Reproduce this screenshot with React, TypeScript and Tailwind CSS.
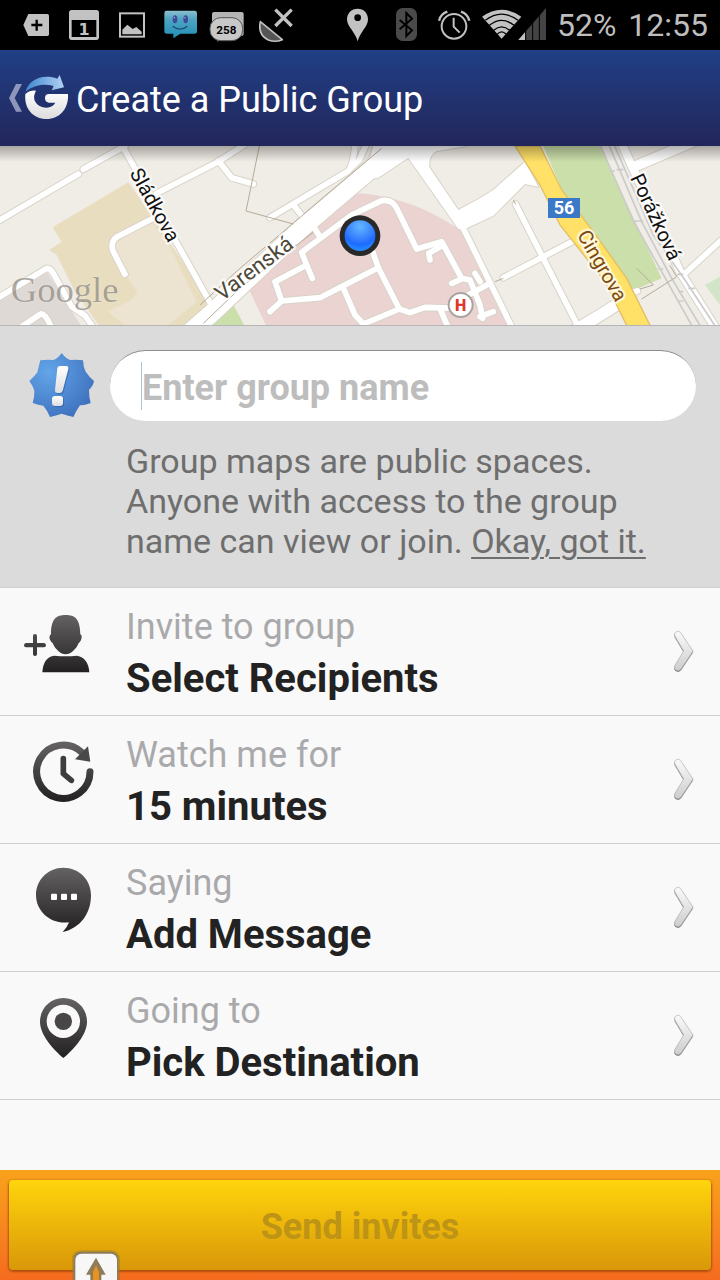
import type { ReactNode } from 'react';

const StatusIcon = ({ viewBox, label, children }: { viewBox: string; label: string; children: ReactNode }) => (
    <svg viewBox={viewBox} className="w-12 h-[50px] shrink-0" role="img" aria-label={label}>
        {children}
    </svg>
);

const StatusBar = () => (
    <div className="h-[50px] bg-black flex items-center pl-3 pr-3 text-[#bebebe]">
        <StatusIcon viewBox="36 0 144 150" label="New item">
            <path d="M85 42H142Q147 42 147 47V103Q147 108 142 108H85L70 75Z" fill="#c2c2c2" />
            <path d="M94 75H127M110 59V92" stroke="#000" strokeWidth="7" />
        </StatusIcon>
        <StatusIcon viewBox="180 0 144 150" label="Calendar">
            <path fillRule="evenodd" d="M215 30H289Q297 30 297 38V112Q297 120 289 120H215Q207 120 207 112V38Q207 30 215 30ZM215 60V111H289V60Z" fill="#c2c2c2" />
            <text x="252" y="105" textAnchor="middle" fontSize="48" fontWeight="700" fill="#c2c2c2" fontFamily="DejaVu Sans, sans-serif">1</text>
        </StatusIcon>
        <StatusIcon viewBox="324 0 144 150" label="Picture">
            <rect x="360" y="40" width="72" height="70" fill="none" stroke="#c2c2c2" strokeWidth="6" />
            <path d="M367 103V89L382 74L398 87L409 81L425 95V103Z" fill="#c2c2c2" />
        </StatusIcon>
        <StatusIcon viewBox="468 0 144 150" label="Message">
            <defs>
                <linearGradient id="chat" x1="0" y1="0" x2="0" y2="1">
                    <stop offset="0" stopColor="#8cbfd0" />
                    <stop offset="0.3" stopColor="#4fa5c2" />
                    <stop offset="1" stopColor="#1f8fb8" />
                </linearGradient>
            </defs>
            <path d="M498 32H585Q591 32 591 40V93Q591 101 584 101H541L520 115V101H500Q493 101 493 93V40Q493 32 498 32Z" fill="url(#chat)" />
            <ellipse cx="525" cy="58" rx="7" ry="12" fill="#3e4a9a" />
            <ellipse cx="557" cy="58" rx="7" ry="12" fill="#3e4a9a" />
            <circle cx="523" cy="53" r="2" fill="#bcd" />
            <circle cx="555" cy="53" r="2" fill="#bcd" />
            <path d="M518 79Q541 96 562 79" fill="none" stroke="#20486e" strokeWidth="4" />
        </StatusIcon>
        <StatusIcon viewBox="612 0 144 150" label="258 unread">
            <path d="M642 36H725Q731 36 731 42V100Q731 108 724 108H664L653 127V108H636V42Q636 36 642 36Z" fill="#b5b5b5" />
            <rect x="630" y="53" width="98" height="69" rx="32" fill="#c8c8c8" stroke="#555" strokeWidth="3" />
            <text x="679" y="102" textAnchor="middle" fontSize="35" fontWeight="700" fill="#000" fontFamily="Roboto, sans-serif">258</text>
        </StatusIcon>
        <StatusIcon viewBox="756 0 144 150" label="GPS off">
            <path d="M781 65Q773 105 805 120Q826 128 847 119Z" fill="#555" stroke="#c2c2c2" strokeWidth="5" strokeLinejoin="round" />
            <path d="M826 29L875 78M875 29L826 78" stroke="#c2c2c2" strokeWidth="10" />
        </StatusIcon>

        <div className="ml-auto flex items-center">
            <StatusIcon viewBox="69 0 144 150" label="Location">
                <path fillRule="evenodd" d="M143 26C124 26 111 40 111 58C111 80 135 95 143 124C151 95 174 80 174 58C174 40 162 26 143 26ZM143 43A10 10 0 1 1 143 63A10 10 0 1 1 143 43Z" fill="#c2c2c2" />
            </StatusIcon>
            <StatusIcon viewBox="213 0 144 150" label="Bluetooth">
                <rect x="258" y="24" width="63" height="99" rx="20" fill="#4a4a4a" />
                <path d="M269 60L306 91L289 108V39L306 56L269 88" fill="none" stroke="#000" strokeWidth="6" />
            </StatusIcon>
            <StatusIcon viewBox="357 0 144 150" label="Alarm">
                <circle cx="432" cy="79" r="37" fill="none" stroke="#c2c2c2" strokeWidth="6" />
                <path d="M431 53V80L449 98" fill="none" stroke="#c2c2c2" strokeWidth="6" />
                <path d="M387 62Q392 42 412 35M478 62Q473 42 453 35" fill="none" stroke="#c2c2c2" strokeWidth="7" />
            </StatusIcon>
            <svg viewBox="501 0 216 150" className="w-18 h-[50px] shrink-0" role="img" aria-label="Wi-Fi and mobile signal">
                <path d="M575 116L516 50Q575 8 634 50Z" fill="#c2c2c2" />
                <path d="M526 61Q575 24 624 61M538 76Q575 46 612 76M551 91Q575 70 599 91M561 103Q575 88 589 103" fill="none" stroke="#000" strokeWidth="4" />
                <path d="M625 120L708 24V120Z" fill="#444" />
                <path d="M625 120L645 97V120Z" fill="#c2c2c2" />
                <path d="M647 90V122M668 60V122M688 40V122" stroke="#000" strokeWidth="3" />
            </svg>
            <span className="ml-2 text-[32px] leading-[50px]">52%</span>
            <span className="ml-3 text-[32px] leading-[50px]">12:55</span>
        </div>
    </div>
);

const TitleBar = () => (
    <header className="h-24 bg-linear-to-b from-[#203f86] to-[#21265a] flex items-center pl-2">
        <button type="button" aria-label="Back" className="shrink-0">
            <svg viewBox="24 225 186 138" className="w-[62px] h-[46px]">
                <defs>
                    <linearGradient id="g-white" x1="0" y1="0" x2="0" y2="1">
                        <stop offset="0" stopColor="#fff" />
                        <stop offset="1" stopColor="#dcdcdc" />
                    </linearGradient>
                    <linearGradient id="g-arrow" x1="0" y1="0" x2="1" y2="0">
                        <stop offset="0" stopColor="#3f86cf" />
                        <stop offset="1" stopColor="#b0d2f2" />
                    </linearGradient>
                </defs>
                <path d="M48 252H66L44 294L66 335H48L27 294Z" fill="#8f96bb" />
                <path d="M76 282Q90 270 108 272Q99 288 104 302Q114 322 140 323Q158 322 166 308H146Q135 306 135 294Q135 282 147 282H204C207 328 177 357 140 357C98 357 72 325 76 282Z" fill="url(#g-white)" />
                <path d="M77 275C84 240 128 219 172 236L179 225L192 262L155 271L161 258C132 250 103 254 77 275Z" fill="url(#g-arrow)" />
            </svg>
        </button>
        <h1 className="pl-[6px] pt-[3px] text-4xl leading-12 text-white">Create a Public Group</h1>
    </header>
);

const roads = [
    'M-10 231L235 87',
    'M250 73L375 3',
    'M360 -10L640 490',
    'M375 388L339 318Q330 290 352 275L455 222',
    'M470 145L655 50L740 -5',
    'M655 47L695 98L760 117',
    'M-10 461L140 370Q152 370 160 385L215 485L255 512L285 555',
    'M50 555L120 508Q135 500 155 550',
    'M810 218L1045 78Q1060 60 1065 0',
    'M1050 72L1078 45L1100 -5',
    'M880 180L912 220',
    'M810 500L845 468L825 410L920 360L905 322L1055 210L1145 167Q1175 162 1190 190L1250 312L1325 290L1385 400L1410 405L1440 480L1448 520',
    'M920 360L937 400',
    'M940 245L962 278',
    'M1290 345L1286 325L1330 300',
    'M845 468L960 458L1135 368L1118 320',
    'M1135 368L1198 492L1090 537L1065 510L1028 425',
    'M1198 492L1230 503L1275 487L1380 490',
    'M1320 490L1345 550',
    'M1355 415L1385 402',
    'M1385 240L1540 555',
    'M1405 450L1470 415',
    'M1440 515L1480 500',
    'M1425 385L1440 410',
    'M1370 210L1490 145',
    'M1547 178L1732 540',
    'M1510 398L1720 288',
    'M1895 443L1912 438',
    'M2050 390L2175 275',
];

const wideRoads = [
    { d: 'M555 575L640 500L910 245L1110 75L1190 -10', w: 54 },
    { d: 'M1690 575Q1790 520 1880 460', w: 34 },
    { d: 'M1858 -20L2040 380L2160 570', w: 24 },
    { d: 'M1910 62L2150 -40', w: 30 },
];

const junction =
    'M1120 3H1400L1310 18Q1287 28 1287 65L1375 195L1440 160L1480 135L1575 50L1615 125L1575 117L1480 212L1395 252H1375L1225 38L1135 98L1090 105Z';

const rails = [
    'M1802 3L1900 228L1985 380L2080 550',
    'M1828 3L1925 230L2015 400L2105 550',
    'M1844 3L1960 270L2055 405L2150 550',
];

// one degree of tilt per street, the labels follow their roads
const streetLabels = [
    { name: 'Sládkova', x: 388, y: 84, angle: 61, size: 60, color: '#111' },
    { name: 'Varenská', x: 666, y: 470, angle: -37, size: 66, color: '#4d4938' },
    { name: 'Cingrova', x: 1730, y: 270, angle: 60, size: 60, color: '#7a4a12' },
    { name: 'Porážková', x: 1890, y: 98, angle: 65, size: 60, color: '#111' },
];

const MapPreview = () => (
    <div className="relative h-[180px] border-b border-[#b5b5b5] overflow-hidden">
        <svg viewBox="0 3 2160 537" preserveAspectRatio="xMidYMid slice" className="block w-full h-full bg-[#f0ece6]" role="img" aria-label="Map of your location" fontFamily="Roboto, sans-serif">
            <defs>
                <radialGradient id="dot" cx="0.5" cy="0.2" r="0.9">
                    <stop offset="0" stopColor="#62b8ff" />
                    <stop offset="0.45" stopColor="#3b82ff" />
                    <stop offset="0.65" stopColor="#1c6bff" />
                    <stop offset="1" stopColor="#2aa0ff" />
                </radialGradient>
            </defs>

            {/* Blocks and parks */}
            <path d="M0 460L140 380L245 545H0Z" fill="#ded9d5" />
            <path d="M385 112L630 470L560 545H300L225 440L170 330L148 315L185 290L158 247Z" fill="#e8ddbe" />
            <path d="M340 300L450 222L510 305L590 470L500 545H380L325 500L345 488L385 470L412 445L375 385Z" fill="#ede3d1" />
            <path d="M600 545L695 470L735 545Z" fill="#cbdfab" />
            <path d="M1060 145Q1130 145 1200 168Q1270 185 1365 245L1390 260L1530 545H800L745 430L930 260Z" fill="#ead3d1" />
            <path d="M1630 3H1800L1985 400L1890 440L1780 260L1685 135Z" fill="#cbdfab" />
            <path d="M2115 420L2160 395V480Z" fill="#d3e5c8" />

            {/* Roads, casing first */}
            <g fill="none" stroke="#d8d4ca" strokeLinecap="round" strokeLinejoin="round">
                {roads.map(d => <path key={d} d={d} strokeWidth="23" />)}
                {wideRoads.map(r => <path key={r.d} d={r.d} strokeWidth={r.w + 6} />)}
                <path d={junction} strokeWidth="6" />
            </g>
            <g fill="none" stroke="#fff" strokeLinecap="round" strokeLinejoin="round">
                {roads.map(d => <path key={d} d={d} strokeWidth="17" />)}
                {wideRoads.map(r => <path key={r.d} d={r.d} strokeWidth={r.w} />)}
                <path d={junction} fill="#fff" stroke="none" />
            </g>
            <path d="M1545 3H1620L1685 135L1780 260L1880 400L1952 545H1882L1815 410L1680 240L1620 120Z" fill="#ffe168" stroke="#e3bf62" strokeWidth="4" />

            {/* Tram lines and footpaths */}
            <g fill="none" stroke="#cbcbcb" strokeWidth="5">
                {rails.map(d => <path key={d} d={d} />)}
                <path d="M1828 78H1845M1850 74H1870M1895 228H1930M1975 372H1990M2032 388H2050M2035 440H2050M2065 430H2085M2035 468H2050" />
            </g>
            <g fill="none" stroke="#b5ab98" strokeWidth="3">
                <path d="M778 3L738 198L880 237" />
                <path d="M1145 10L720 370L600 480M940 262L725 425L610 535" />
                <path d="M1910 370L1960 420L1920 432M1925 462L2030 395L2010 362" />
                <path d="M1485 410L1510 400M1540 165L1547 178" />
            </g>

            <text x="32" y="472" fontSize="110" fill="#8a857d" fillOpacity="0.7" stroke="#fff" strokeOpacity="0.35" strokeWidth="3" paintOrder="stroke" fontFamily="Liberation Serif, serif">Google</text>

            {streetLabels.map(s => (
                <text
                    key={s.name}
                    transform={`translate(${s.x} ${s.y}) rotate(${s.angle})`}
                    fontSize={s.size}
                    fill={s.color}
                    stroke="#fff"
                    strokeOpacity="0.7"
                    strokeWidth="14"
                    strokeLinejoin="round"
                    paintOrder="stroke"
                >
                    {s.name}
                </text>
            ))}

            <rect x="1644" y="159" width="96" height="60" fill="#3b78c6" />
            <text x="1692" y="207" textAnchor="middle" fontSize="54" fontWeight="700" fill="#fff">56</text>

            <circle cx="1382" cy="480" r="36" fill="#fff" stroke="#a9a3a0" strokeWidth="6" />
            <text x="1382" y="497" textAnchor="middle" fontSize="48" fontWeight="900" fill="#dc3a2b">H</text>

            <circle cx="1080" cy="272" r="61" fill="#292929" />
            <circle cx="1080" cy="272" r="46" fill="url(#dot)" />
        </svg>
        <div className="absolute inset-x-0 top-0 h-4 bg-linear-to-b from-black/30 to-transparent"></div>
    </div>
);

const GroupForm = () => (
    <section className="bg-[#dbdbdb] border-b border-[#cfcfcf] grid grid-cols-[110px_1fr] pt-6 pr-6 pb-[26px]">
        <svg viewBox="84 81 201 201" className="w-[67px] h-[67px] ml-7 mt-[2px]" role="img" aria-label="Notice">
            <defs>
                <radialGradient id="badge" cx="0.3" cy="0.3" r="0.8">
                    <stop offset="0" stopColor="#62a5e8" />
                    <stop offset="1" stopColor="#3e70bd" />
                </radialGradient>
                <linearGradient id="bang" x1="0" y1="0" x2="0" y2="1">
                    <stop offset="0" stopColor="#fff" />
                    <stop offset="1" stopColor="#dedede" />
                </linearGradient>
            </defs>
            <path d="M185 84Q198 102 212 105Q231 103 249 106Q250 127 257 140Q268 156 282 168Q279 184 267 194Q267 218 272 234Q253 242 240 241Q230 255 220 276Q202 272 185 266Q168 272 150 276Q142 256 130 242Q115 240 98 234Q104 216 103 197Q100 184 88 168Q104 154 112 142Q116 125 121 106Q140 103 160 105Q174 100 185 84Z" fill="url(#badge)" />
            <path d="M172 129Q173 123 181 123H199Q206 124 205 132L188 197Q186 204 179 204H171Q164 203 165 196Z" fill="#2d5ea8" transform="translate(3 4)" opacity="0.6" />
            <path d="M172 129Q173 123 181 123H199Q206 124 205 132L188 197Q186 204 179 204H171Q164 203 165 196Z" fill="url(#bang)" />
            <rect x="159" y="217" width="33" height="30" rx="9" fill="#2d5ea8" opacity="0.6" />
            <rect x="156" y="213" width="33" height="30" rx="9" fill="url(#bang)" />
        </svg>
        <div className="relative">
            <input
                type="text"
                aria-label="Group name"
                placeholder="Enter group name"
                className="block w-full h-[71px] rounded-full bg-white border-t border-[#8c8c8c] pl-8 pr-8 pt-1 text-4xl font-bold text-[#222] placeholder:text-[#bdbdbd] outline-none"
            />
            <span className="absolute left-[31px] top-3 h-12 w-px bg-[#a9c4e0]"></span>
        </div>
        <p className="col-start-2 pl-4 pt-5 text-[34px] leading-10 text-[#6e6e6e]">
            Group maps are public spaces. Anyone with access to the group name can view or join.{' '}
            <a href="#" className="underline decoration-2 underline-offset-4">Okay, got it.</a>
        </p>
    </section>
);

const options = [
    {
        label: 'Invite to group',
        value: 'Select Recipients',
        viewBox: '72 57 216 216',
        icon: (
            <g fill="url(#ink-1)">
                <path d="M105 147Q111 147 111 153V174H132Q138 175 138 181Q138 187 132 187H111V207Q111 213 105 213Q99 213 99 207V187H78Q72 187 72 181Q72 175 78 174H99V153Q99 147 105 147Z" />
                <path d="M197 90C225 90 240 101 241 148Q248 152 243 165Q240 172 236 174C229 193 211 208 197 208C183 208 165 193 158 174Q153 172 149 162Q147 151 153 148C153 101 169 90 197 90Z" />
                <path d="M127 262Q130 216 163 212Q197 216 231 212Q265 218 268 262Z" />
            </g>
        ),
        from: 90,
        to: 263,
    },
    {
        label: 'Watch me for',
        value: '15 minutes',
        viewBox: '72 441 216 216',
        icon: (
            <g>
                <path d="M270 560A80 80 0 1 1 245 502" fill="none" stroke="url(#ink-2)" strokeWidth="21" strokeLinecap="round" />
                <path d="M264 484L271 530L225 523Z" fill="#4a4849" />
                <path d="M190 521V566L214 586" fill="none" stroke="#3e3c3d" strokeWidth="17" strokeLinecap="round" strokeLinejoin="round" />
            </g>
        ),
        from: 471,
        to: 651,
    },
    {
        label: 'Saying',
        value: 'Add Message',
        viewBox: '72 60 216 216',
        icon: (
            <g>
                <path d="M190 83C238 83 273 120 273 165C273 222 240 265 188 276Q202 262 207 247C152 254 108 214 108 165C108 120 144 83 190 83Z" fill="url(#ink-3)" />
                <g fill="#fff">
                    <rect x="153" y="161" width="18" height="19" rx="3" />
                    <rect x="183" y="161" width="18" height="19" rx="3" />
                    <rect x="213" y="161" width="18" height="19" rx="3" />
                </g>
            </g>
        ),
        from: 83,
        to: 276,
    },
    {
        label: 'Going to',
        value: 'Pick Destination',
        viewBox: '72 444 216 216',
        icon: (
            <g>
                <path d="M190 474C230 474 261 505 261 545C261 582 225 624 190 654C155 624 120 582 120 545C120 505 151 474 190 474Z" fill="url(#ink-4)" />
                <circle cx="190" cy="544" r="50" fill="#f9f9f9" />
                <circle cx="190" cy="544" r="26" fill="#484647" />
            </g>
        ),
        from: 474,
        to: 654,
    },
];

const OptionList = () => (
    <ul>
        {options.map((option, i) => (
            <li key={option.label} className="border-b border-[#cfcfcf]">
                <button type="button" className="w-full h-[127px] flex pl-6 pr-6 text-left">
                    <svg viewBox={option.viewBox} className="w-18 h-18 mt-4 shrink-0" aria-hidden="true">
                        <defs>
                            <linearGradient id={`ink-${i + 1}`} gradientUnits="userSpaceOnUse" x1="0" y1={option.from} x2="0" y2={option.to}>
                                <stop offset="0" stopColor="#646263" />
                                <stop offset="1" stopColor="#222021" />
                            </linearGradient>
                        </defs>
                        {option.icon}
                    </svg>
                    <span className="flex-1 pl-[30px] pt-4">
                        <span className="block text-4xl leading-[46px] text-[#a9a9ac]">{option.label}</span>
                        <span className="block text-[40px] leading-[58px] font-bold text-[#222]">{option.value}</span>
                    </span>
                    <svg viewBox="216 88 72 132" className="w-6 h-11 self-center shrink-0" aria-hidden="true">
                        <defs>
                            <linearGradient id={`chevron-${i + 1}`} x1="0" y1="0" x2="0" y2="1">
                                <stop offset="0" stopColor="#fafafa" />
                                <stop offset="1" stopColor="#cdcdcd" />
                            </linearGradient>
                        </defs>
                        <path d="M225 107Q221 94 232 92Q238 91 242 96L279 151L243 205Q238 211 230 209Q221 206 224 195L251 151Z" fill="#6f6f6f" stroke="#8a8a8a" strokeWidth="2" transform="translate(0 3)" />
                        <path d="M225 107Q221 94 232 92Q238 91 242 96L279 151L243 205Q238 211 230 209Q221 206 224 195L251 151Z" fill={`url(#chevron-${i + 1})`} stroke="#b4b4b4" strokeWidth="2" />
                    </svg>
                </button>
            </li>
        ))}
    </ul>
);

const Footer = () => (
    <footer className="relative mt-auto h-[110px] overflow-hidden bg-linear-to-b from-[#f9a21b] to-[#f56b1f] px-[9px] py-[10px]">
        <button
            type="button"
            disabled
            className="w-full h-[90px] rounded-[4px] pt-1 bg-linear-to-b from-[#ffd50c] to-[#d99708] shadow-[0_1px_2px_1px_rgba(120,50,0,0.55)] text-4xl font-bold text-[#bd9416]"
        >
            Send invites
        </button>
        <svg viewBox="210 294 156 96" className="absolute left-[70px] bottom-0 w-[52px] h-8" aria-hidden="true">
            <rect x="216" y="301" width="144" height="120" rx="26" fill="#8d7c3c" opacity="0.45" />
            <rect x="221" y="305" width="134" height="120" rx="22" fill="#8d7c5c" />
            <rect x="226" y="311" width="125" height="120" rx="18" fill="#f7f7f7" />
            <path d="M288 323L317 374H304V400H271V374H258Z" fill="#8f7b5a" />
            <path d="M288 346L297 366V400H279V366Z" fill="#e8941c" />
        </svg>
    </footer>
);

const App = () => {
    return (
        <div className="min-h-screen flex flex-col bg-[#f9f9f9] font-[Roboto,sans-serif]">
            <StatusBar />
            <TitleBar />
            <MapPreview />
            <GroupForm />
            <OptionList />
            <Footer />
        </div>
    );
};

export default App;
